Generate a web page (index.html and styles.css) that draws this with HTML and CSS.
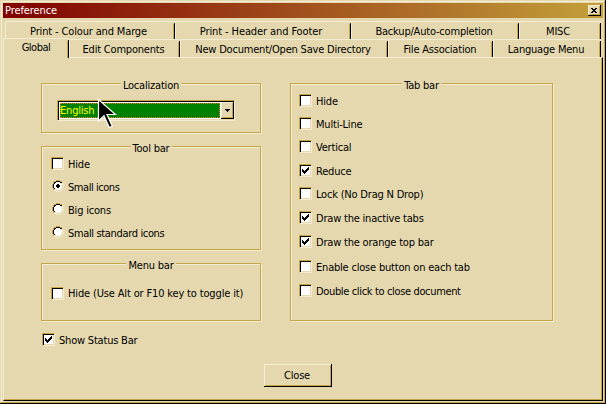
FILE: index.html
```html
<!DOCTYPE html>
<html lang="en">
<head>
<meta charset="utf-8">
<title>Preference</title>
<link rel="stylesheet" href="styles.css">
</head>
<body>
<svg class="defs" width="0" height="0" aria-hidden="true">
  <symbol id="tick" viewBox="0 0 7 7"><path d="M0 2h1v1h1v1h1v-1h1v-1h1v-1h1v-1h1v3h-1v1h-1v1h-1v1h-1v1h-1v-1h-1v-1h-1z"/></symbol>
  <symbol id="radio" viewBox="0 0 12 12">
    <path fill="#fff" d="M4 2h4v1h1v1h1v4h-1v1h-1v1h-4v-1h-1v-1h-1v-4h1v-1h1z"/>
    <path fill="#c5a545" d="M4 0h4v1h-4zM2 1h2v1h-2zM8 1h2v1h-2zM1 2h1v2h-1zM0 4h1v4h-1zM1 8h1v2h-1z"/>
    <path fill="#000" d="M4 1h4v1h-4zM2 2h2v1h-2zM8 2h2v1h-2zM2 3h1v1h-1zM1 4h1v4h-1zM2 8h1v1h-1z"/>
    <path fill="#f3ebcf" d="M10 2h1v2h-1zM11 4h1v4h-1zM10 8h1v2h-1zM8 10h2v1h-2zM4 11h4v1h-4zM2 10h2v1h-2z"/>
  </symbol>
</svg>
<main class="window">
  <header class="title"><h1>Preference</h1><button class="x" aria-label="Close window"><svg width="6" height="5" viewBox="0 0 6 5"><path d="M0 0h2v1h2v-1h2v1h-1v1h-1v1h1v1h1v1h-2v-1h-2v1h-2v-1h1v-1h1v-1h-1v-1h-1z"/></svg></button></header>
  <nav class="tabs back">
    <span class="tab t1">Print - Colour and Marge</span><span class="tab t2">Print - Header and Footer</span><span class="tab t3">Backup/Auto-completion</span><span class="tab t4">MISC</span>
  </nav>
  <nav class="tabs front">
    <span class="tab active">Global</span><span class="tab t5">Edit Components</span><span class="tab t6">New Document/Open Save Directory</span><span class="tab t7">File Association</span><span class="tab t8">Language Menu</span>
  </nav>
  <div class="pane">
    <div class="columns">
      <div class="left">
        <section class="group local">
          <h2>Localization</h2>
          <div class="combo"><span class="value"><span>English</span></span><span class="drop"><svg width="5" height="3" viewBox="0 0 5 3"><path d="M0 0h5v1h-1v1h-1v1h-1v-1h-1v-1h-1z"/></svg></span>
            <svg class="cursor" width="20" height="32" viewBox="0 0 20 32"><path d="M1.5 1.5V23L7 17.7L12.3 29.5L15.3 28.2L10 16.5H18.5Z" fill="#000" stroke="#fff" stroke-width="1.2"/></svg>
          </div>
        </section>
        <section class="group tool">
          <h2>Tool bar</h2>
          <div class="opt"><i class="box"></i><span>Hide</span></div>
          <div class="opt radio"><svg><use href="#radio"/><path d="M5 4h2v1h1v2h-1v1h-2v-1h-1v-2h1z"/></svg><span class="tight">Small icons</span></div>
          <div class="opt radio"><svg><use href="#radio"/></svg><span>Big icons</span></div>
          <div class="opt radio"><svg><use href="#radio"/></svg><span class="snug">Small standard icons</span></div>
        </section>
        <section class="group menu">
          <h2>Menu bar</h2>
          <div class="opt"><i class="box"></i><span class="wide">Hide (Use Alt or F10 key to toggle it)</span></div>
        </section>
        <div class="opt status"><i class="box"><svg><use href="#tick"/></svg></i><span>Show Status Bar</span></div>
      </div>
      <section class="group tabbar">
        <h2>Tab bar</h2>
        <div class="opt"><i class="box"></i><span>Hide</span></div>
        <div class="opt"><i class="box"></i><span>Multi-Line</span></div>
        <div class="opt"><i class="box"></i><span>Vertical</span></div>
        <div class="opt more"><i class="box"><svg><use href="#tick"/></svg></i><span>Reduce</span></div>
        <div class="opt"><i class="box"></i><span>Lock (No Drag N Drop)</span></div>
        <div class="opt more"><i class="box"><svg><use href="#tick"/></svg></i><span>Draw the inactive tabs</span></div>
        <div class="opt more"><i class="box"><svg><use href="#tick"/></svg></i><span>Draw the orange top bar</span></div>
        <div class="opt most"><i class="box"></i><span>Enable close button on each tab</span></div>
        <div class="opt more"><i class="box"></i><span class="snug">Double click to close document</span></div>
      </section>
    </div>
    <button class="close">Close</button>
  </div>
</main>
</body>
</html>
```
FILE: styles.css
```css
:root { --face: #e5d8ae; --light: #f5edd3; --gold: #c5a545; }
* { box-sizing: border-box; }
body { margin: 0; background: var(--face); color: #000; font: 11px/13px "DejaVu Sans Condensed", "DejaVu Sans", sans-serif; font-stretch: condensed; letter-spacing: -0.2px; white-space: nowrap; overflow: hidden; }
h1, h2 { margin: 0; font: inherit; }
svg { display: block; }
.defs { position: absolute; }
.window { width: 606px; height: 404px; padding: 3px; box-shadow: inset -1px -1px #000, inset 1px 1px var(--face), inset -2px -2px var(--gold), inset 2px 2px var(--light); display: flex; flex-direction: column; }
.title { height: 15px; flex: none; display: flex; align-items: center; justify-content: space-between; padding: 0 2px; background: linear-gradient(90deg, #800000, #c3a03a); color: #fff; }
.title h1 { letter-spacing: -0.1px; }
.x { width: 13px; height: 11px; padding: 0 0 1px 3px; border: 0; background: var(--face); box-shadow: inset -1px -1px #000, inset 1px 1px var(--light), inset -2px -2px var(--gold); }
.tabs { display: flex; flex: none; }
.back { height: 18px; margin: 3px 0 0 2px; }
.front { height: 18px; }
.tab { height: 18px; padding: 3px 3px 0 0; text-align: center; border-top: 1px solid var(--light); border-left: 1px solid var(--light); border-radius: 2px 2px 0 0; background: linear-gradient(#000, #000) right 1px / 1px 100% no-repeat, linear-gradient(var(--gold), var(--gold)) right 1px top 2px / 1px 100% no-repeat; }
.t1 { width: 170px; padding-right: 4px; letter-spacing: -0.15px; }
.t2 { width: 176px; padding-right: 5px; letter-spacing: -0.1px; }
.t3 { width: 168px; letter-spacing: -0.2px; }
.t4 { width: 82px; padding-right: 5px; }
.active { width: 66px; height: 20px; margin-top: -1px; padding: 2px 1px 0 0; background-color: var(--face); z-index: 1; letter-spacing: -0.5px; }
.t5 { width: 111px; }
.t6 { width: 208px; }
.t7 { width: 105px; padding-right: 2px; }
.t8 { width: 108px; }
.pane { flex: none; height: 344px; border: 1px solid; border-color: var(--light) #000 #000 var(--light); box-shadow: inset -1px -1px var(--gold); }
.columns { display: flex; gap: 29px; height: 288px; padding: 25px 0 0 37px; }
.left { width: 220px; }
.group { border: 1px solid var(--gold); box-shadow: 1px 1px var(--light), inset 1px 1px var(--light); }
.group h2 { width: fit-content; height: 13px; margin: -5px auto 0; padding: 0 2px; background: var(--face); }
.local { height: 50px; }
.tool { height: 104px; margin-top: 13px; }
.menu { height: 58px; margin-top: 13px; }
.tabbar { width: 263px; height: 238px; }
.combo { position: relative; width: 178px; height: 21px; margin: 8px 0 0 15px; padding: 2px 0 2px 2px; display: flex; background: #fff; border: 1px solid; border-color: var(--gold) var(--light) var(--light) var(--gold); box-shadow: inset 1px 1px #000, inset -1px -1px var(--face); }
.value { width: 160px; height: 15px; flex: none; color: #ff0; background: #008000; border: 1px dotted #e08020; }
.value span { margin-left: -1px; }
.drop { width: 13px; height: 17px; flex: none; margin: -1px 0 0 1px; display: grid; place-items: center; background: var(--face); box-shadow: inset -1px -1px #000, inset 1px 1px var(--light), inset -2px -2px var(--gold); }
.cursor { position: absolute; left: 39px; top: -3px; z-index: 2; }
.opt { display: flex; height: 13px; margin: 10px 0 0 9px; gap: 4px; }
.opt span { padding-top: 1px; }
.opt .snug { letter-spacing: -0.35px; }
.opt .tight { letter-spacing: -0.45px; }
.opt .wide { padding-top: 0; letter-spacing: -0.15px; }
h2 + .opt { margin-top: 2px; }
.tabbar .opt { margin-left: 8px; }
.tabbar .more { margin-top: 11px; }
.tabbar .most { margin-top: 12px; }
.menu h2 + .opt { margin-top: 15px; }
.status { margin: 12px 0 0 1px; }
.box { width: 13px; height: 13px; flex: none; padding: 2px; background: #fff; border: 1px solid; border-color: var(--gold) var(--light) var(--light) var(--gold); box-shadow: inset 1px 1px #000, inset -1px -1px var(--face); }
.box svg { width: 7px; height: 7px; }
.radio svg { width: 12px; height: 12px; margin-left: 1px; flex: none; }
.close { display: block; width: 68px; height: 23px; margin: 18px 0 0 260px; border: 0; padding: 0 2px 1px 0; background: var(--face); font: inherit; letter-spacing: inherit; box-shadow: inset -1px -1px #000, inset 1px 1px var(--light), inset -2px -2px var(--gold); }
```
